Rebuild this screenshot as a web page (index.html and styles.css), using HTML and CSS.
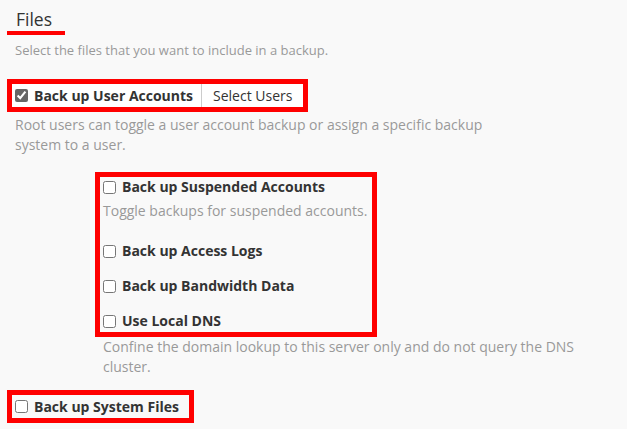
FILE: index.html
```html
<!DOCTYPE html>
<html>
<head>
<meta charset="utf-8">
<link rel="stylesheet" href="styles.css">
</head>
<body>
<div class="page">
  <h2 class="title">Files</h2>
  <p class="desc">Select the files that you want to include in a backup.</p>

  <div class="mark mark-inline">
    <label class="opt"><input type="checkbox" checked><span>Back up User Accounts</span></label>
    <button class="btn" type="button">Select Users</button>
  </div>
  <p class="help">Root users can toggle a user account backup or assign a specific backup system to a user.</p>

  <div class="indent">
    <div class="mark mark-group">
      <label class="opt"><input type="checkbox"><span>Back up Suspended Accounts</span></label>
      <p class="help help-in">Toggle backups for suspended accounts.</p>
      <label class="opt opt-after-help"><input type="checkbox"><span>Back up Access Logs</span></label>
      <label class="opt opt-next"><input type="checkbox"><span>Back up Bandwidth Data</span></label>
      <label class="opt opt-next"><input type="checkbox"><span>Use Local DNS</span></label>
    </div>
    <p class="help help-indent">Confine the domain lookup to this server only and do not query the DNS cluster.</p>
  </div>

  <div class="mark mark-inline mark-last">
    <label class="opt opt-pad"><input type="checkbox"><span>Back up System Files</span></label>
  </div>
</div>
</body>
</html>
```

FILE: styles.css
```css
html, body {
  margin: 0;
  padding: 0;
  background: #f9f9f9;
}
body {
  font-family: "Open Sans", "Liberation Sans", sans-serif;
  font-size: 14px;
  color: #333;
}
.page {
  padding: 8px 15px 0 15px;
}
.title {
  display: block;
  width: fit-content;
  margin: 0 0 0 -8px;
  padding: 0 13px 0 9px;
  font-size: 17.5px;
  font-weight: 400;
  line-height: 23px;
  color: #333;
  border-bottom: 4px solid #ff0000;
}
.desc {
  margin: 5px 0 0 0;
  font-size: 13px;
  line-height: 20px;
  color: #999;
}
.mark {
  border: 5px solid #ff0000;
  background: #fff;
}
.mark-inline {
  display: flex;
  align-items: stretch;
  width: fit-content;
  margin: 19px 0 0 -8px;
  padding-left: 3px;
  height: 23px;
}
.opt {
  display: flex;
  align-items: center;
  font-weight: 700;
  line-height: 20px;
  color: #333;
}
.opt input {
  width: 13px;
  height: 13px;
  margin: 0 6px 0 0;
  accent-color: #666;
}
.mark-inline .opt {
  padding-right: 8px;
}
.btn {
  font-family: inherit;
  font-size: 14px;
  color: #333;
  background: #fff;
  border: 0;
  border-left: 1px solid #ccc;
  padding: 0 11px;
  height: 23px;
  margin: 0;
}
.help {
  margin: 3px 0 0 0;
  max-width: 500px;
  line-height: 20px;
  color: #999;
}
.indent {
  margin-top: 17px;
}
.mark-group {
  margin-left: 80px;
  padding: 0 0 1px 3px;
  box-sizing: content-box;
  width: 269px;
  background: transparent;
}
.help-in {
  margin: 4px 0 0 0;
}
.opt-after-help {
  margin-top: 20px;
}
.opt-next {
  margin-top: 15px;
}
.help-indent {
  margin: 0 0 0 88px;
}
.mark-last {
  margin-top: 13px;
  background: transparent;
}
.mark-last .opt-pad {
  padding-right: 10px;
}
```
